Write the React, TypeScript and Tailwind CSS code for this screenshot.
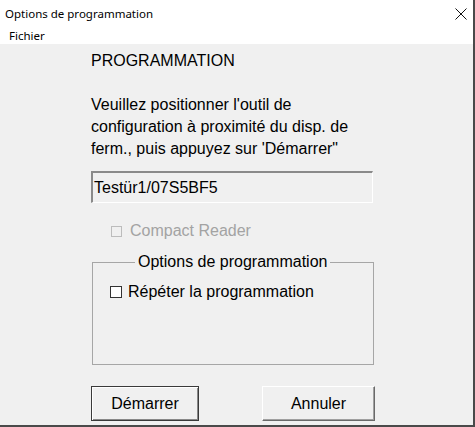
export default function App() {
  return (
    <div className="w-[475px] h-[427px] bg-[#f0f0f0] border-r-2 border-b-2 border-[#4a4a4a] flex flex-col overflow-hidden font-['Liberation_Sans',Arial,sans-serif] text-black">
      {/* title bar */}
      <div className="h-[27px] bg-white flex items-center justify-between pl-[5px] pr-[4px] shrink-0">
        <span className="text-[11.5px] font-['Noto_Sans',sans-serif] leading-none">Options de programmation</span>
        <svg width="12" height="12" viewBox="0 0 12 12" className="mr-[2px]">
          <path d="M0.5 0.5 L11.5 11.5 M11.5 0.5 L0.5 11.5" stroke="#111" strokeWidth="1" />
        </svg>
      </div>
      {/* menu */}
      <div className="h-[17px] bg-white flex items-center pl-[9px] shrink-0">
        <span className="text-[11.5px] font-['Noto_Sans',sans-serif] leading-none">Fichier</span>
      </div>

      <div className="flex flex-col pl-[91px] pt-[6px] text-[16px]">
        <div className="leading-[22px]">PROGRAMMATION</div>
        <p className="mt-[22px] leading-[22px] w-[300px]">
          Veuillez positionner l'outil de
          <br />
          configuration à proximité du disp. de
          <br />
          ferm., puis appuyez sur 'Démarrer"
        </p>

        <div className="mt-[11px] w-[282px] h-[32px] border-t-2 border-l-2 border-[#8a8a8a] border-b border-r border-b-white border-r-white flex items-center pl-[1px] leading-none">
          Testür1/07S5BF5
        </div>

        <div className="mt-[17px] h-[22px] flex items-center pl-[20px] text-[#a3a3a3]">
          <span className="w-[11px] h-[11px] border border-[#bcbcbc] bg-[#f0f0f0]" />
          <span className="ml-[8px] leading-none">Compact Reader</span>
        </div>

        <fieldset className="mt-[11px] ml-[1px] w-[282px] h-[112px] border border-[#a6a6a6] px-0">
          <legend className="ml-[42px] px-[3px] leading-[18px]">Options de programmation</legend>
          <div className="mt-[10px] h-[22px] flex items-center pl-[17px]">
            <span className="w-[12px] h-[12px] border border-[#333] bg-white" />
            <span className="ml-[6px] leading-none">Répéter la programmation</span>
          </div>
        </fieldset>

        <div className="mt-[21px] flex">
          <button className="w-[108px] h-[35px] bg-[#f0f0f0] border border-[#3a3a3a] shadow-[inset_1px_1px_0_#ffffff,inset_-1px_-1px_0_#888888] leading-none">
            Démarrer
          </button>
          <button className="ml-[63px] w-[113px] h-[35px] bg-[#f0f0f0] border border-t-white border-l-white border-b-[#6a6a6a] border-r-[#6a6a6a] shadow-[inset_-1px_-1px_0_#a0a0a0] leading-none">
            Annuler
          </button>
        </div>
      </div>
    </div>
  );
}
